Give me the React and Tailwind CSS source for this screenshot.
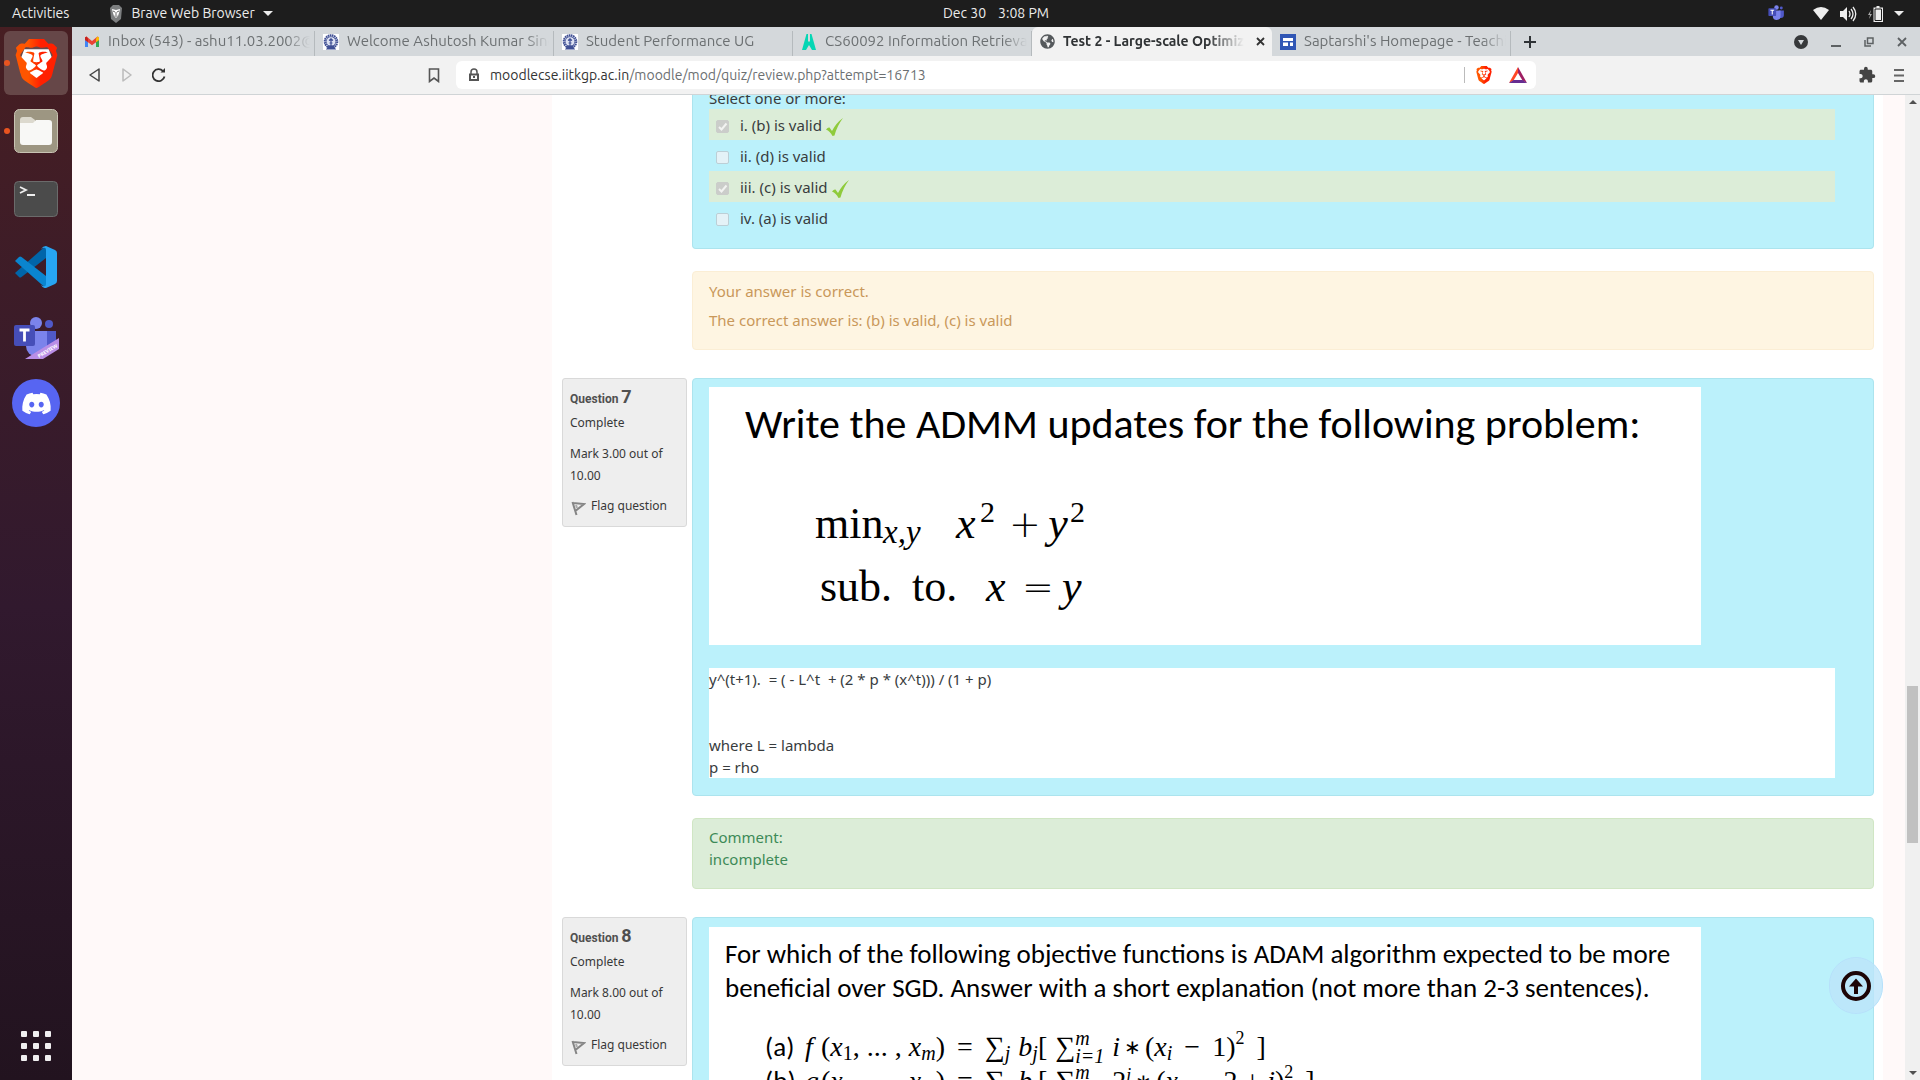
import React from "react";
import { SiBrave } from "react-icons/si";
import { FaDiscord, FaGlobeAmericas } from "react-icons/fa";
import { MdExtension } from "react-icons/md";

const UI = "font-['Ubuntu','Noto_Sans',sans-serif]";

function BraveIcon({ size, id }) {
  return (
    <svg width={size} height={size} viewBox="0 0 24 24" aria-hidden="true">
      <defs>
        <linearGradient id={id} x1="0" x2="1">
          <stop offset="0.3" stopColor="#ff5500" />
          <stop offset="0.6" stopColor="#ff2000" />
        </linearGradient>
      </defs>
      <path d="M6 5h12l1.500 4-2 7-5.500 4-5.500-4-2-7z" fill="#fff" />
      <SiBrave size={24} fill={"url(#" + id + ")"} color="#ff4a10" />
    </svg>
  );
}

function TeamsIcon({ width, preview }) {
  return (
    <svg width={width} viewBox={preview ? "0 -5 46 49" : "0 0 46 44"} aria-hidden="true">
      <circle cx="23" cy="7" r="6" fill="#7b83eb" />
      <circle cx="36" cy="8" r="4" fill="#5059c9" />
      <path d="M30 15h13v12a8 8 0 0 1-8 8h-5z" fill="#5059c9" />
      <path d="M13 15h21v15a10.500 10.500 0 0 1-21 0z" fill="#7b83eb" />
      <rect x="1" y="9" width="21" height="21" rx="2" fill="#464eb8" />
      <path d="M6.500 14h10M11.500 14v11.500" stroke="#fff" strokeWidth="2.800" />
      {preview && (
        <g>
          <path d="M12 43 46 22V33L30 43z" fill="#b98ee6" />
          <text x="26" y="42" transform="rotate(-31 26 42)" fontSize="5" fontWeight="700" fill="#fff" fontFamily="Noto Sans">
            PREVIEW
          </text>
        </g>
      )}
    </svg>
  );
}

function GearCrest() {
  return (
    <svg width="16" height="16" viewBox="0 0 16 16" aria-hidden="true">
      <rect width="16" height="16" fill="#fff" />
      <circle cx="8" cy="7.500" r="6.200" fill="none" stroke="#3f4f94" strokeWidth="2.200" strokeDasharray="1.600 .5" />
      <circle cx="8" cy="7.500" r="4.800" fill="#dfe3f3" stroke="#3f4f94" strokeWidth=".8" />
      <path d="M8 4v8M6 6.500 8 5l2 1.500M6.500 9h3M4 15l2-3h4l2 3z" stroke="#3f4f94" strokeWidth="1.200" fill="#3f4f94" />
    </svg>
  );
}

function GmailIcon() {
  return (
    <svg width="16" height="16" viewBox="0 0 16 16" aria-hidden="true">
      <path d="M1 4v9h3V6z" fill="#4285f4" />
      <path d="M15 4v9h-3V6z" fill="#34a853" />
      <path d="M1 3.500 2.500 2.500 8 7l5.500-4.500L15 3.500V6L8 11.200 1 6z" fill="#ea4335" />
      <path d="M12 4.500 13.500 2.500 15 3.500V6l-3 2.200z" fill="#fbbc04" />
      <path d="M1 3.500 2.500 2.500 4 4.500V8L1 6z" fill="#c5221f" />
    </svg>
  );
}

function ClassIcon() {
  return (
    <svg width="16" height="16" viewBox="0 0 16 16" aria-hidden="true">
      <path d="M5.500 0h1.500v7.500h2V0h1.500L15 16h-4l-3-5-3 5H1z" fill="#04d6b4" />
    </svg>
  );
}

function SitesIcon() {
  return (
    <svg width="16" height="16" viewBox="0 0 16 16" aria-hidden="true">
      <rect width="16" height="16" fill="#3056b5" />
      <path d="M3 4h10v3H3zM3 8.500h5v3.500H3zM10 8.500h3v3.500h-3z" fill="#fff" />
    </svg>
  );
}

const TABS = [
  { title: "Inbox (543) - ashu11.03.2002@gmail.com", icon: <GmailIcon /> },
  { title: "Welcome Ashutosh Kumar Singh", icon: <GearCrest /> },
  { title: "Student Performance UG", icon: <GearCrest /> },
  { title: "CS60092 Information Retrieval", icon: <ClassIcon /> },
  { title: "Test 2 - Large-scale Optimization", icon: <FaGlobeAmericas size={15} color="#55595c" />, active: true },
  { title: "Saptarshi's Homepage - Teaching", icon: <SitesIcon /> },
];

function Tab({ title, icon, active }) {
  return (
    <div
      className={
        active
          ? "flex h-full min-w-0 flex-[0_1_240px] items-center gap-2 rounded-t-md bg-[#f2f2f2] pl-2 pr-1"
          : "flex h-full min-w-0 flex-[0_1_239px] items-center pt-1"
      }
    >
      <div className={active ? "flex min-w-0 flex-1 items-center gap-2" : "flex h-full min-w-0 flex-1 items-center gap-2 border-r border-[#b5babd] pb-1 pl-2 pr-1"}>
        <span className="shrink-0">{icon}</span>
        <button
          className={
            active
              ? "min-w-0 flex-1 overflow-hidden whitespace-nowrap text-left text-[14px] font-semibold text-[#303335] [mask-image:linear-gradient(to_right,#000_80%,transparent)]"
              : "min-w-0 flex-1 overflow-hidden whitespace-nowrap text-left text-[15px] text-[#6c7072] [mask-image:linear-gradient(to_right,#000_88%,transparent)]"
          }
        >
          {title}
        </button>
      </div>
      {active && (
        <button aria-label="Close tab" className="flex size-4 shrink-0 items-center justify-center">
          <svg width="9" height="9" viewBox="0 0 9 9" stroke="#333" strokeWidth="1.800"><path d="m1 1 7 7M8 1 1 8" /></svg>
        </button>
      )}
    </div>
  );
}

function TopPanel() {
  return (
    <header className={`${UI} grid h-[27px] shrink-0 grid-cols-3 items-center bg-[#1d1d1d] text-[14px] text-[#ececec]`}>
      <div className="flex items-center pl-3">
        <button>Activities</button>
        <button className="ml-10 flex items-center gap-2">
          <svg width="14" height="18" viewBox="0 0 14 18" aria-hidden="true">
            <path d="M4 0h6l3 3-1 11-5 4-5-4L1 3z" fill="#7d7f80" />
            <path d="M3 4 7 5l4-1-1 4-1 3-2 2-2-2-1-3z" fill="#fff" />
            <path d="m4 6 2 1M10 6 8 7M7 7v3M5.500 11h3" stroke="#666" />
          </svg>
          Brave Web Browser
          <span className="border-x-[5px] border-t-[5px] border-x-transparent border-t-[#ececec]" />
        </button>
      </div>
      <button className="flex justify-center gap-3 pl-[72px]"><span>Dec 30</span><span>3:08 PM</span></button>
      <div className="flex items-center justify-end pr-4">
        <TeamsIcon width={17} />
        <svg className="ml-7" width="16" height="13" viewBox="0 0 16 13" aria-label="Wi-Fi"><path d="M0 3Q8-3 16 3L8 13z" fill="#eee" /></svg>
        <svg className="ml-[11px]" width="17" height="16" viewBox="0 0 17 16" fill="none" stroke="#eee" aria-label="Volume">
          <path d="M0 5h3l4-4v14l-4-4H0z" fill="#eee" stroke="none" />
          <path d="M9 5q2 3 0 6M11 3q4 5 0 10M13 1q5.500 7 0 14" strokeWidth="1.300" />
        </svg>
        <svg className="ml-[11px]" width="15" height="16" viewBox="0 0 15 16" aria-label="Battery">
          <path d="M3 4 0 9h2l-1 4 3-5H2z" fill="#aaa" />
          <path d="M8.500 0h3v1.500H15V16H5.500V1.500h3z" fill="#eee" />
          <path d="M7 3h6.500v11.500H7z" fill="none" stroke="#1d1d1d" />
        </svg>
        <span className="ml-[11px] border-x-[5px] border-t-[5px] border-x-transparent border-t-[#ececec]" />
      </div>
    </header>
  );
}

function DockItem({ label, running, active, children }) {
  return (
    <div className="relative flex w-full justify-center">
      {running && <span className="absolute left-1 top-[29px] z-10 size-[6px] rounded-full bg-[#e95420]" />}
      <button
        aria-label={label}
        className={active ? "flex size-16 items-center justify-center rounded-md bg-[#664748]" : "flex size-16 items-center justify-center"}
      >
        {children}
      </button>
    </div>
  );
}

function Dock() {
  return (
    <nav className="flex w-[72px] shrink-0 flex-col items-center gap-1 bg-linear-to-b from-[#471e22] via-[#31192e] via-55% to-[#22131f] pt-1">
      <DockItem label="Brave" running active><BraveIcon size={49} id="brave-dock" /></DockItem>
      <DockItem label="Files" running>
        <svg width="44" height="44" viewBox="0 0 44 44">
          <rect x=".5" y=".5" width="43" height="43" rx="5" fill="#9d9682" stroke="#c8c3b3" />
          <path d="M6 11q0-3 3-3h8l4 3v6H6z" fill="#dcd9ce" />
          <path d="M6 14h13l3-3h13q3 0 3 3v19q0 3-3 3H9q-3 0-3-3z" fill="#f8f8f6" />
        </svg>
      </DockItem>
      <DockItem label="Terminal">
        <svg width="44" height="36" viewBox="0 0 44 36">
          <rect x=".5" y=".5" width="43" height="35" rx="4" fill="#4b4b4b" stroke="#6b6b6b" />
          <path d="m6 6 6 3-6 3M13 14h8" stroke="#eee" strokeWidth="1.800" fill="none" />
        </svg>
      </DockItem>
      <DockItem label="Visual Studio Code">
        <svg width="42" height="42" viewBox="0 0 42 42">
          <path d="m31 0-5 4L0 27l4 4q1 1 2.500 0L31 12z" fill="#0065a9" />
          <path d="M0 15l4-4q1-1 2.500 0L31 30v12l-5-4z" fill="#0a85cf" />
          <path d="m31 0 9 4q2 1 2 3v28q0 2-2 3l-9 4q-3 .5-5-3 5 3 5-1V4q0-4-5-1 2-3 5-3z" fill="#27a5f2" />
        </svg>
      </DockItem>
      <DockItem label="Microsoft Teams Preview"><TeamsIcon width={46} preview /></DockItem>
      <DockItem label="Discord">
        <span className="flex size-12 items-center justify-center rounded-full bg-[#5765f2]"><FaDiscord size={31} color="#fff" /></span>
      </DockItem>
      <button aria-label="Show applications" className="mb-[19px] mt-auto grid grid-cols-3 gap-[6px]">
        {Array.from({ length: 9 }, (_, i) => <span key={i} className="size-[6px] rounded-[1px] bg-[#f0eff0]" />)}
      </button>
    </nav>
  );
}

function TabStrip() {
  return (
    <div className={`${UI} flex h-[29px] shrink-0 items-center bg-[#d4d8db] pl-1`}>
      <div className="flex h-full min-w-0 flex-[0_1_1435px]">{TABS.map((t) => <Tab key={t.title} {...t} />)}</div>
      <button aria-label="New tab" className="ml-3 shrink-0">
        <svg width="14" height="14" viewBox="0 0 14 14" stroke="#2f3336" strokeWidth="2"><path d="M7 1v12M1 7h12" /></svg>
      </button>
      <div className="ml-auto flex shrink-0 items-center gap-[23px] pr-[13px]">
        <button aria-label="Search tabs">
          <svg width="14" height="14" viewBox="0 0 14 14"><circle cx="7" cy="7" r="7" fill="#37393b" /><path d="M4 5h6l-3 5z" fill="#d4d8db" /></svg>
        </button>
        <button aria-label="Minimize"><svg width="10" height="10" viewBox="0 0 10 10"><path d="M0 8h10v2H0z" fill="#5d6163" /></svg></button>
        <button aria-label="Restore"><svg width="10" height="10" viewBox="0 0 10 10" fill="none" stroke="#5d6163" strokeWidth="1.500"><path d="M3.500 1h5.500v5.500H3.500zM1 3v6h6" /></svg></button>
        <button aria-label="Close window"><svg width="10" height="10" viewBox="0 0 10 10" stroke="#5d6163" strokeWidth="1.800"><path d="m1 1 8 8M9 1 1 9" /></svg></button>
      </div>
    </div>
  );
}

function Toolbar() {
  return (
    <div className={`${UI} flex h-[39px] shrink-0 items-center border-b border-[#d0d4d6] bg-[#f2f2f2] pl-4`}>
      <div className="flex w-[352px] items-center gap-[18px]">
        <button aria-label="Back"><svg width="14" height="14" viewBox="0 0 14 14" fill="none" stroke="#444" strokeWidth="1.500" strokeLinejoin="round"><path d="M11 1v12L2 7z" /></svg></button>
        <button aria-label="Forward"><svg width="14" height="14" viewBox="0 0 14 14" fill="none" stroke="#bbb" strokeWidth="1.500" strokeLinejoin="round"><path d="M3 1v12l8-6z" /></svg></button>
        <button aria-label="Reload"><svg width="14" height="14" viewBox="0 0 14 14" fill="none" stroke="#333" strokeWidth="1.800"><path d="M12.500 8.500A6 6 0 1 1 11 3" /><path d="M8.500 4.500H13V0z" fill="#333" stroke="none" /></svg></button>
        <button aria-label="Bookmark" className="ml-auto">
          <svg width="12" height="15" viewBox="0 0 12 15" fill="none" stroke="#555" strokeWidth="1.600"><path d="M1.500 1h9v12.500L6 10l-4.500 3.500z" /></svg>
        </button>
      </div>
      <div className="ml-4 flex h-7 min-w-0 flex-[0_1_1080px] items-center rounded-md bg-white pl-3">
        <svg width="12" height="14" viewBox="0 0 12 14" aria-label="Secure"><path d="M3 6V4a3 3 0 0 1 6 0v2" fill="none" stroke="#555" strokeWidth="1.500" /><path d="M1 5.500h10V13H1z" fill="#555" /><path d="M3 7.500h6V11H3z" fill="#fff" /><path d="M5 8h2v2H5z" fill="#555" /></svg>
        <div className="ml-[10px] flex-1 text-[14px] text-[#6b6f71]"><span className="text-[#333]">moodlecse.iitkgp.ac.in</span>/moodle/mod/quiz/review.php?attempt=16713</div>
        <span className="mr-[10px] h-4 w-px bg-[#bbb]" />
        <BraveIcon size={18} id="brave-url" />
        <svg className="ml-4 mr-[9px]" width="18" height="16" viewBox="0 0 18 16" aria-label="Brave Rewards">
          <path d="M9 0 0 16l4.500-2.500L9 6z" fill="#ff4724" /><path d="m9 0 9 16-4.500-2.500L9 6z" fill="#9e1f63" /><path d="M0 16h18l-4.500-3h-9z" fill="#662d91" />
        </svg>
      </div>
      <div className="ml-auto flex items-center gap-[18px] pr-4">
        <button aria-label="Extensions"><MdExtension size={18} color="#444" /></button>
        <button aria-label="Menu"><svg width="10" height="13" viewBox="0 0 10 13" fill="#666"><path d="M0 0h10v2H0zM0 5.500h10v2H0zM0 11h10v2H0z" /></svg></button>
      </div>
    </div>
  );
}

function GreenTick() {
  return (
    <svg width="17" height="18" viewBox="0 0 17 18" className="ml-1 mt-1 shrink-0" aria-label="Correct">
      <path d="M0 11.500Q2 9 3.500 9.500L6 13Q10 5 17 0 11 8 8.500 17.500L6.500 18Q4 13 0 11.500z" fill="#8fcb3c" />
    </svg>
  );
}

const OPTIONS = [
  { text: "i. (b) is valid", checked: true },
  { text: "ii. (d) is valid", checked: false },
  { text: "iii. (c) is valid", checked: true },
  { text: "iv. (a) is valid", checked: false },
];

function Option({ text, checked }) {
  return (
    <label className={checked ? "flex h-[31px] items-center bg-[#dcedd8] pl-[7px]" : "flex h-[31px] items-center pl-[7px]"}>
      <span className="relative mt-1 flex size-[13px] shrink-0">
        <input
          type="checkbox"
          disabled
          defaultChecked={checked}
          className="size-[13px] appearance-none rounded-[2px] border border-[#bccfd6] bg-[#e4f2f7] checked:border-[#cbcdca] checked:bg-[#cbcdca]"
        />
        {checked && (
          <svg className="absolute inset-0" width="13" height="13" viewBox="0 0 13 13" fill="none" stroke="#f2f3f1" strokeWidth="2"><path d="m3 7 2.500 2.500L10.500 3.500" /></svg>
        )}
      </span>
      <span className="ml-[11px]">{text}</span>
      {checked && <GreenTick />}
    </label>
  );
}

function Info({ number, mark }) {
  return (
    <aside className="w-[125px] shrink-0 self-start rounded-[3px] border border-[#d9d9d9] bg-[#eeeeee] px-[7px] pb-[9px] pt-[7px] text-[12px] leading-[22px] text-[#383838]">
      <h3 className="mb-[2px] font-['Liberation_Sans_Narrow','Roboto',sans-serif] text-[12px] font-bold text-[#505050]">
        Question <span className="text-[18px]">{number}</span>
      </h3>
      <p>Complete</p>
      <p className="mt-[9px]">{`Mark ${mark} out of 10.00`}</p>
      <a href="#flag" className="mt-2 flex items-center">
        <svg className="mr-[5px] mt-1" width="16" height="16" viewBox="0 0 16 16" fill="none" stroke="#858585" strokeWidth="2"><path d="m2.500 2 4 13M3 3l11 1-8 6.500" /><path d="m6 5 1 3" stroke="#aaa" /></svg>
        Flag question
      </a>
    </aside>
  );
}

function AdmmProblem() {
  return (
    <figure className="h-[258px] max-w-[992px] overflow-hidden bg-white text-black">
      <p className="whitespace-nowrap pl-9 pt-3 font-['Carlito','Lato',sans-serif] text-[42px] font-medium leading-[50px]">
        Write the ADMM updates for the following problem:
      </p>
      <div className="whitespace-nowrap font-['Liberation_Serif',serif] text-[44px] leading-[62px]">
        <div className="mt-11 flex h-[63px] pl-[106px]">
          <span className="w-[68px]">min</span>
          <span className="w-[73px] pt-2 text-[33px] italic">x,y</span>
          <i className="w-6">x</i>
          <span className="-mt-3 w-6 text-[30px]">2</span>
          <span className="w-[42px] text-center font-['DejaVu_Sans',sans-serif] text-[38px] font-extralight">+</span>
          <i className="w-6 text-center">y</i>
          <span className="-mt-3 text-[30px]">2</span>
        </div>
        <div className="flex pl-[111px]">
          <span className="w-[92px]">sub.</span>
          <span className="w-[74px]">to.</span>
          <i className="w-[28px]">x</i>
          <span className="w-[48px] text-center font-['DejaVu_Sans',sans-serif] text-[38px] font-extralight">=</span>
          <i>y</i>
        </div>
      </div>
    </figure>
  );
}

function Limits({ upper, lower }) {
  return (
    <span className="flex flex-col text-[20px] leading-[18px]">
      <i>{upper}</i>
      <i>{lower}</i>
    </span>
  );
}

function Sub({ children }) {
  return <span className="pt-3 text-[20px]">{children}</span>;
}

function ObjectiveLine({ label, name, factor, base }) {
  return (
    <div className="flex h-[34px] items-center whitespace-nowrap pl-[56px] font-['Cambria_Math','Liberation_Serif',serif] text-[28px] leading-[34px]">
      <span className="w-10 font-['Carlito','Lato',sans-serif] text-[27px]">({label})</span>
      <i className="w-4">{name}</i>
      <span>(</span><i>x</i><Sub>1</Sub><span>, ... ,&nbsp;</span><i>x</i><Sub><i>m</i></Sub><span>)</span>
      <span className="mx-3">=</span>
      <span>∑</span><Sub><i>j</i></Sub>
      <i className="ml-2">b</i><Sub><i>j</i></Sub><span>[</span>
      <span className="ml-2">∑</span><Limits upper="m" lower="i=1" />
      <span className="ml-2">{factor}</span>
      <span className="mx-1 text-[20px]">∗</span>
      <span>(</span><i>x</i><Sub><i>i</i></Sub>
      <span className="mx-3">−</span>
      <span>{base}</span><span>)</span><sup className="text-[18px]">2</sup><span className="ml-3">]</span>
    </div>
  );
}

function AdamProblem() {
  return (
    <figure className="max-w-[992px] overflow-hidden bg-white pt-[10px] text-black">
      <p className="whitespace-nowrap pl-4 font-['Carlito','Lato',sans-serif] text-[27px] font-medium leading-[34px]">
        For which of the following objective functions is ADAM algorithm expected to be more<br />
        beneficial over SGD. Answer with a short explanation (not more than 2-3 sentences).
      </p>
      <div className="mt-[25px]">
        <ObjectiveLine label="a" name="f" factor={<i>i</i>} base="1" />
        <ObjectiveLine label="b" name="g" factor={<span>2<sup className="text-[18px] italic">i</sup></span>} base={<span>2 + <i>i</i></span>} />
      </div>
    </figure>
  );
}

function Page() {
  return (
    <main className="flex min-h-0 min-w-0 flex-1 overflow-hidden bg-[#fff9f9] font-['Noto_Sans',sans-serif] text-[15px] leading-[22px] text-[#383c3e]">
      <div className="w-[480px] shrink-0" />
      <div className="relative min-w-0 flex-1 bg-white pl-[10px] pr-[9px]">
        <section className="ml-[130px] -mt-2 rounded-b-[4px] border-x border-b border-[#ace4ee] bg-[#bbf1fb] pb-[15px] pl-4 pr-[38px]">
          <p>Select one or more:</p>
          {OPTIONS.map((o) => <Option key={o.text} {...o} />)}
        </section>
        <section className="ml-[130px] mt-[22px] rounded-[4px] border border-[#fbeed5] bg-[#fef5e2] pb-[18px] pl-4 pt-2 text-[#c9985a]">
          <p>Your answer is correct.</p>
          <p className="mt-[7px]">The correct answer is: (b) is valid, (c) is valid</p>
        </section>

        <article className="mt-7 flex gap-[5px]">
          <Info number="7" mark="3.00" />
          <div className="min-w-0 flex-1">
            <section className="rounded-[4px] border border-[#ace4ee] bg-[#bbf1fb] pb-[17px] pl-4 pr-[38px] pt-2">
              <AdmmProblem />
              <div className="mt-[23px] whitespace-pre-wrap bg-white">{"y^(t+1).  = ( - L^t  + (2 * p * (x^t))) / (1 + p)\n\n\nwhere L = lambda\np = rho"}</div>
            </section>
            <section className="mt-[22px] rounded-[4px] border border-[#d0e6c4] bg-[#dcedd8] pb-[18px] pl-4 pt-[7px] text-[#3d8a57]">
              <p>Comment:</p>
              <p>incomplete</p>
            </section>
          </div>
        </article>

        <article className="mt-7 flex gap-[5px]">
          <Info number="8" mark="8.00" />
          <section className="min-w-0 flex-1 rounded-[4px] border border-[#ace4ee] bg-[#bbf1fb] pb-4 pl-4 pr-[38px] pt-[9px]">
            <AdamProblem />
          </section>
        </article>
        <a
          href="#top"
          aria-label="Back to top"
          className="fixed bottom-[66px] right-[37px] flex h-[57px] w-[54px] items-center justify-center rounded-full border border-[#b6e0fa] bg-[#bde5fa]/80"
        >
          <svg width="30" height="30" viewBox="0 0 30 30" fill="none" stroke="#1d0506" strokeWidth="4"><circle cx="15" cy="15" r="13" /><path d="M15 23V10" /><path d="m8 15.500 7-8 7 8z" fill="#1d0506" stroke="none" /></svg>
        </a>
      </div>
      <div className="w-[22px] shrink-0" />
      <div className="flex w-[15px] shrink-0 flex-col items-center bg-[#f0f0f0] py-[5px]">
        <span className="border-x-4 border-b-4 border-x-transparent border-b-[#505050]" />
        <div className="flex w-full flex-1 flex-col items-center">
          <div className="flex-[586]" />
          <div className="w-[11px] flex-[158] bg-[#c1c1c1]" />
          <div className="flex-[229]" />
        </div>
        <span className="border-x-4 border-t-4 border-x-transparent border-t-[#505050]" />
      </div>
    </main>
  );
}

export default function App() {
  return (
    <div className="flex h-screen flex-col overflow-hidden">
      <TopPanel />
      <div className="flex min-h-0 flex-1">
        <Dock />
        <div className="flex min-w-0 flex-1 flex-col">
          <TabStrip />
          <Toolbar />
          <Page />
        </div>
      </div>
    </div>
  );
}
